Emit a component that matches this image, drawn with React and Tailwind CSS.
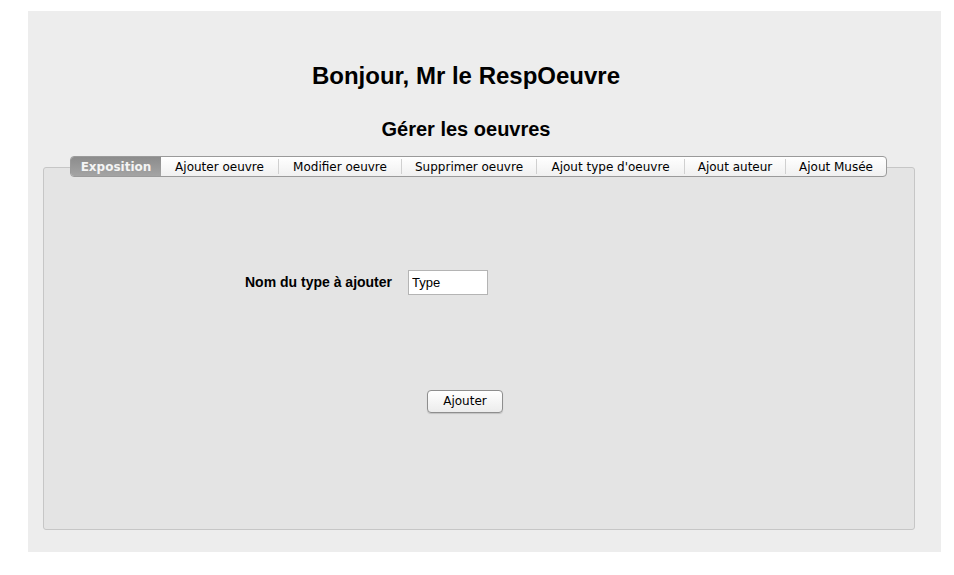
import React from "react";

const tabs = [
  { label: "Exposition", w: 90, active: true },
  { label: "Ajouter oeuvre", w: 117 },
  { label: "Modifier oeuvre", w: 123 },
  { label: "Supprimer oeuvre", w: 135 },
  { label: "Ajout type d'oeuvre", w: 148 },
  { label: "Ajout auteur", w: 101 },
  { label: "Ajout Musée", w: 101 },
];

export default function App() {
  return (
    <div className="w-[954px] h-[575px] bg-white pt-[11px] pl-[28px]">
      <div className="w-[913px] h-[541px] bg-[#ededed] flex flex-col">
        <div className="w-[876px] flex flex-col items-center pt-[53px] font-['Liberation_Sans',Arial,sans-serif] font-bold text-black">
          <div className="text-[24px] leading-[24px]">Bonjour, Mr le RespOeuvre</div>
          <div className="mt-[31px] text-[20px] leading-[20px]">Gérer les oeuvres</div>
        </div>
        <div className="relative mt-[28px] ml-[15px] w-[872px] h-[363px] bg-[#e4e4e4] border border-[#c6c6c6] rounded-[3px]">
          <div className="absolute left-[26px] top-[-12px] flex h-[21px] border border-[#9a9a9a] rounded-[4px] bg-gradient-to-b from-white to-[#f0f0f0] overflow-hidden font-['DejaVu_Sans',sans-serif] text-[12px]">
            {tabs.map((t, i) =>
              t.active ? (
                <div
                  key={t.label}
                  style={{ width: t.w }}
                  className="flex items-center justify-center bg-gradient-to-b from-[#8c8c8c] to-[#a4a4a4] text-[#f4f4f4] font-semibold"
                >
                  {t.label}
                </div>
              ) : (
                <div key={t.label} style={{ width: t.w }} className="flex items-center">
                  {i > 1 && <div className="w-px h-[15px] bg-[#d0d0d0]" />}
                  <div className="flex-1 text-center text-black">{t.label}</div>
                </div>
              )
            )}
          </div>
          <div className="flex items-center mt-[102px] ml-[201px]">
            <span className="font-['Liberation_Sans',Arial,sans-serif] font-bold text-[14px] text-black">
              Nom du type à ajouter
            </span>
            <input
              defaultValue="Type"
              className="ml-[16px] w-[80px] h-[25px] bg-white border border-[#b4b4b4] px-[3px] text-[13px] font-['Liberation_Sans',Arial,sans-serif] text-black outline-none"
            />
          </div>
          <div className="mt-[92px] ml-[383px]">
            <button className="w-[76px] h-[23px] rounded-[4px] border border-[#8e8e8e] bg-gradient-to-b from-white to-[#ececec] shadow-[0_1px_1px_rgba(0,0,0,0.15)] font-['DejaVu_Sans',sans-serif] text-[12px] text-black">
              Ajouter
            </button>
          </div>
        </div>
      </div>
    </div>
  );
}
